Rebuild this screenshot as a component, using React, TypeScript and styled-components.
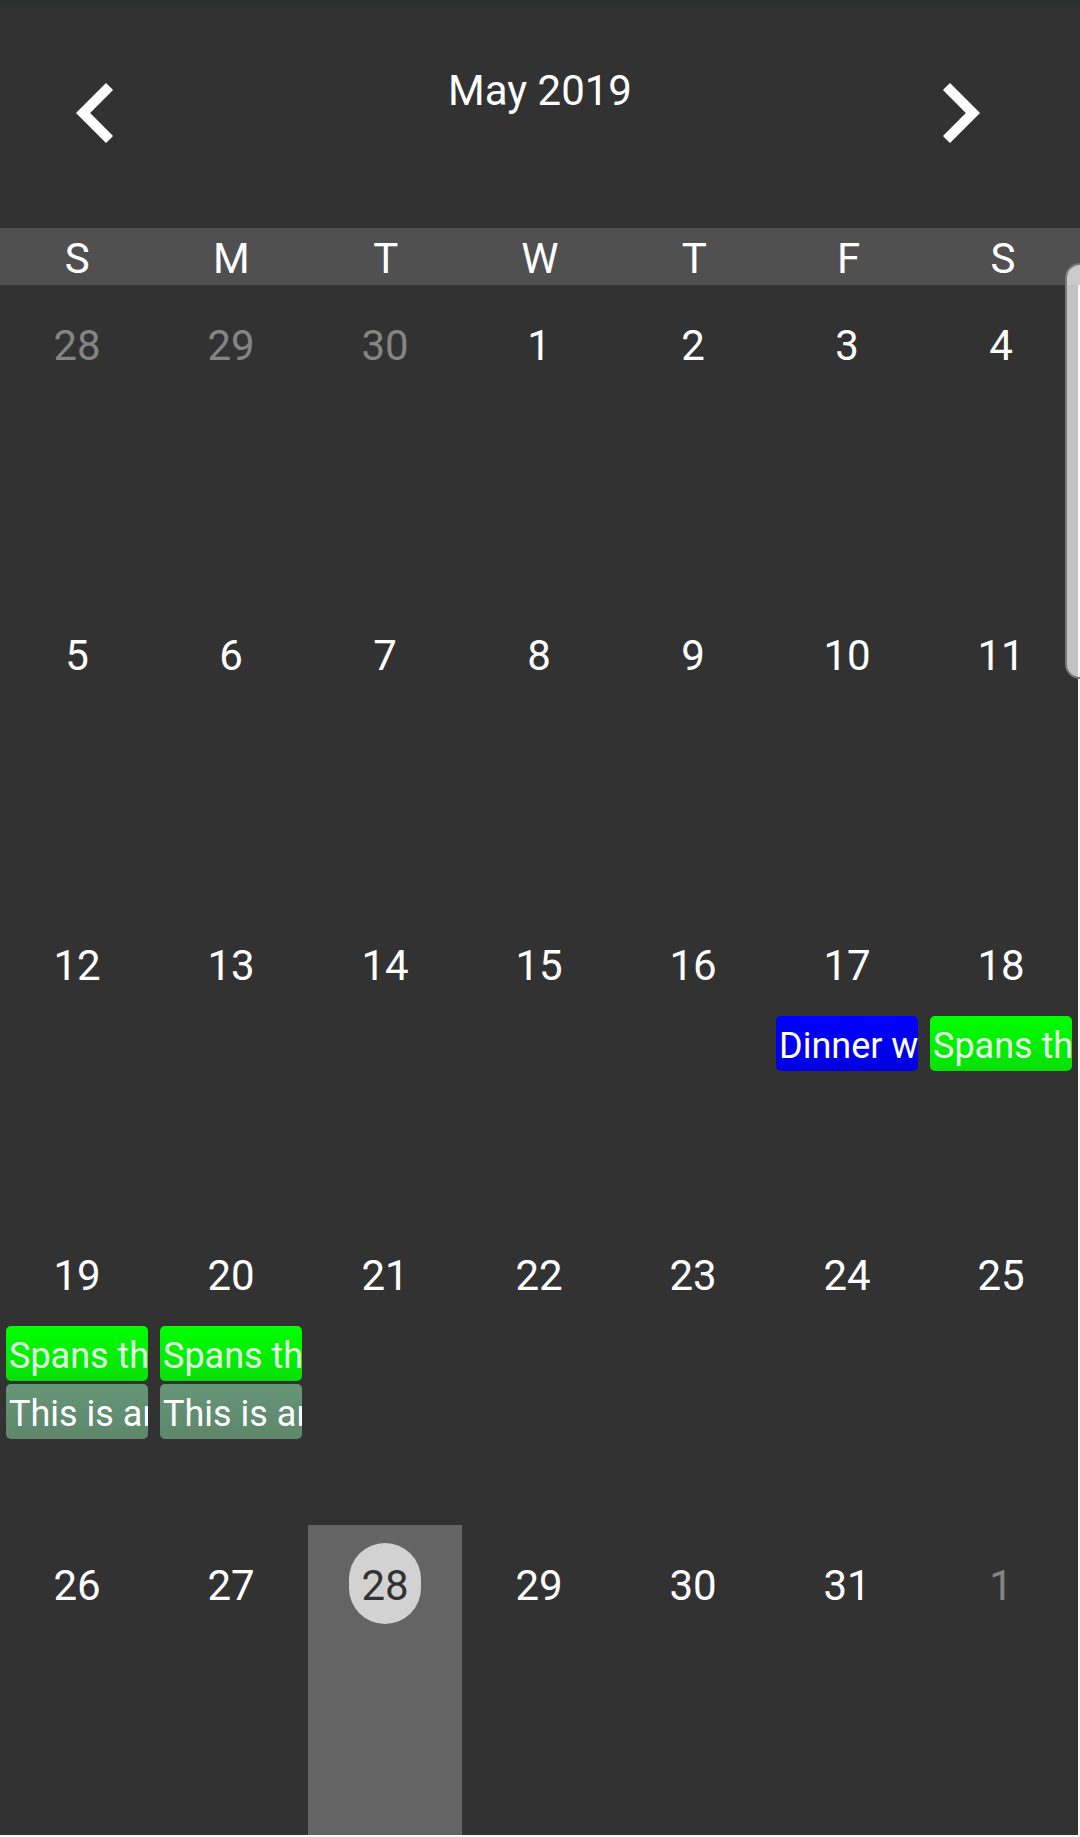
import React from "react";
import styled, { createGlobalStyle } from "styled-components";

const GlobalStyle = createGlobalStyle`
  *, *::before, *::after { box-sizing: border-box; }
  body {
    margin: 0;
    background: #fafafa;
    font-family: Roboto, "Liberation Sans", sans-serif;
  }
`;

const Screen = styled.main`
  position: relative;
  overflow: hidden;
  color: #fff;
  padding-bottom: 2px;
`;

const Header = styled.header`
  display: grid;
  grid-template-columns: 1fr auto 1fr;
  align-items: start;
  min-height: 228px;
  padding: 51px 60px 0 36px;
  border-top: 2px solid #20302f;
  background: linear-gradient(#2e2e2e, #323232 10px);
  padding: 51px 0 0;
`;

const Title = styled.h1`
  margin: 0;
  padding-top: 13px;
  font-size: 42px;
  font-weight: 400;
  line-height: 50px;
`;

const PlainButton = styled.button`
  padding: 0;
  border: 0;
  background: none;
  color: inherit;
  font: inherit;
  cursor: pointer;
`;

const NavButton = styled(PlainButton)<{ $side: "left" | "right" }>`
  display: flex;
  justify-self: ${(p) => (p.$side === "left" ? "start" : "end")};
  margin: ${(p) => (p.$side === "left" ? "0 0 0 36px" : "0 60px 0 0")};
`;

const NavIcon = styled.svg`
  width: 120px;
  height: 120px;
  fill: #fff;
`;

const Calendar = styled.table`
  display: block;
  width: 100%;
`;

const WeekdayHead = styled.thead`
  display: block;
  background: #505050;
`;

const WeekdayRow = styled.tr`
  display: grid;
  grid-template-columns: repeat(7, 1fr);
`;

const Weekday = styled.th`
  padding: 4px 0 0;
  font-size: 42px;
  font-weight: 400;
  line-height: 53px;
  text-align: center;
`;

const Weeks = styled.tbody`
  display: block;
  padding-right: 2px;
`;

const Week = styled.tr`
  display: grid;
  grid-template-columns: repeat(7, minmax(0, 1fr));
  background: #323232;
`;

const Day = styled.td<{ $selected: boolean }>`
  display: flex;
  flex-direction: column;
  gap: 3px;
  min-height: 310px;
  padding: 18px 6px 0;
  background: ${(p) => (p.$selected ? "#646464" : "transparent")};
`;

const DayNumber = styled(PlainButton)<{ $muted: boolean; $selected: boolean }>`
  align-self: center;
  min-width: 72px;
  margin-bottom: 9px;
  padding: 4px 12px 0;
  border-radius: 36px;
  font-size: 42px;
  line-height: 77px;
  color: ${(p) => (p.$selected ? "#323232" : p.$muted ? "#848484" : "#fff")};
  background: ${(p) => (p.$selected ? "#d2d2d2" : "transparent")};
`;

type Tone = "blue" | "green" | "sage";

const tones: Record<Tone, { from: string; to: string; text: string }> = {
  blue: { from: "#0000ff", to: "#0000e0", text: "#fff" },
  green: { from: "#00ff00", to: "#08e008", text: "#e4ffe4" },
  sage: { from: "#669678", to: "#5e866b", text: "#fff" },
};

const EventChip = styled(PlainButton)<{ $tone: Tone }>`
  overflow: hidden;
  padding: 6px 0 0 3px;
  border-radius: 5px;
  color: ${(p) => tones[p.$tone].text};
  background: linear-gradient(${(p) => tones[p.$tone].from}, ${(p) => tones[p.$tone].to});
  font-size: 36px;
  line-height: 49px;
  text-align: left;
  white-space: nowrap;
`;

const ScrollThumb = styled.div`
  position: absolute;
  top: 263px;
  right: -15px;
  width: 30px;
  height: 416px;
  border: 2px solid #7a7a7a;
  border-radius: 15px;
  background: rgba(255, 255, 255, 0.7);
`;

const weekdays = ["S", "M", "T", "W", "T", "F", "S"];
const FIRST_OFFSET = 3;
const PREVIOUS_MONTH_DAYS = 30;
const MONTH_DAYS = 31;
const SELECTED_DAY = 28;

const events: Record<number, { tone: Tone; title: string }[]> = {
  17: [{ tone: "blue", title: "Dinner w" }],
  18: [{ tone: "green", title: "Spans th" }],
  19: [
    { tone: "green", title: "Spans th" },
    { tone: "sage", title: "This is an" },
  ],
  20: [
    { tone: "green", title: "Spans th" },
    { tone: "sage", title: "This is an" },
  ],
};

const weeks = Array.from({ length: 5 }, (_, week) =>
  Array.from({ length: 7 }, (_, column) => {
    const day = week * 7 + column + 1 - FIRST_OFFSET;
    if (day < 1) return { label: PREVIOUS_MONTH_DAYS + day, current: false };
    if (day > MONTH_DAYS) return { label: day - MONTH_DAYS, current: false };
    return { label: day, current: true };
  })
);

export default function App() {
  return (
    <>
      <GlobalStyle />
      <Screen>
        <Header>
          <NavButton $side="left" aria-label="Previous month">
            <NavIcon viewBox="0 0 24 24" aria-hidden="true">
              <path d="M15.41 7.41L14 6l-6 6 6 6 1.41-1.41L10.83 12z" />
            </NavIcon>
          </NavButton>
          <Title>May 2019</Title>
          <NavButton $side="right" aria-label="Next month">
            <NavIcon viewBox="0 0 24 24" aria-hidden="true">
              <path d="M10 6L8.59 7.41 13.17 12l-4.58 4.59L10 18l6-6z" />
            </NavIcon>
          </NavButton>
        </Header>
        <Calendar>
          <WeekdayHead>
            <WeekdayRow>
              {weekdays.map((name, i) => (
                <Weekday key={i} scope="col">{name}</Weekday>
              ))}
            </WeekdayRow>
          </WeekdayHead>
          <Weeks>
            {weeks.map((days, w) => (
              <Week key={w}>
                {days.map(({ label, current }) => {
                  const selected = current && label === SELECTED_DAY;
                  return (
                    <Day key={label} $selected={selected}>
                      <DayNumber $muted={!current} $selected={selected}>{label}</DayNumber>
                      {current &&
                        (events[label] ?? []).map((event) => (
                          <EventChip key={event.title} $tone={event.tone}>{event.title}</EventChip>
                        ))}
                    </Day>
                  );
                })}
              </Week>
            ))}
          </Weeks>
        </Calendar>
        <ScrollThumb />
      </Screen>
    </>
  );
}
